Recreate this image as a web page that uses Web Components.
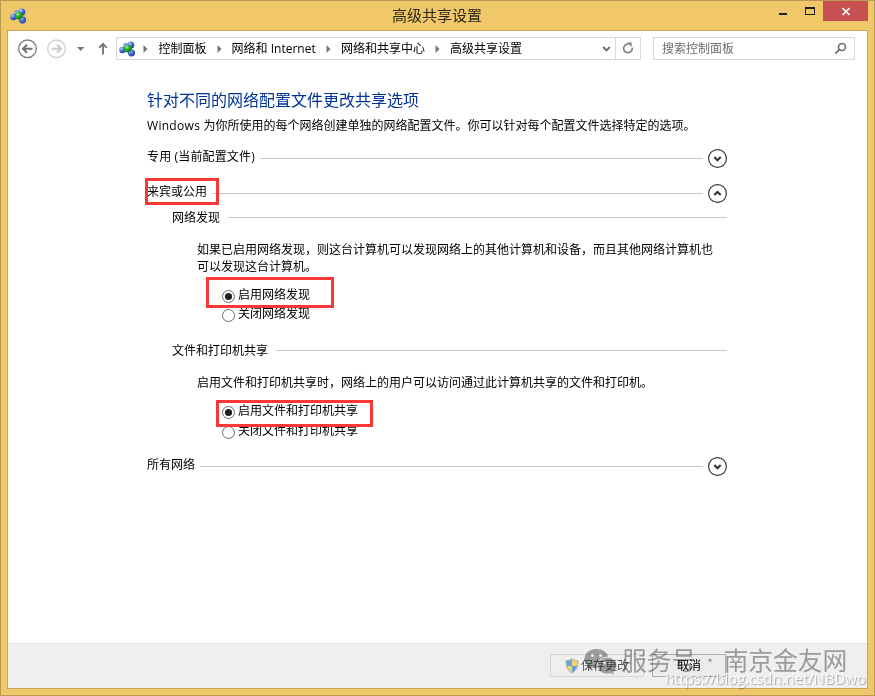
<!DOCTYPE html>
<html lang="zh-CN">
<head>
<meta charset="utf-8">
<title>高级共享设置</title>
<style>
  body {
    margin: 0;
    height: 696px;
    overflow: hidden;
    font: 12px/16px "Open Sans", "Noto Sans CJK SC", sans-serif;
    color: #000;
  }
</style>
</head>
<body>
<app-window caption="高级共享设置">
  <nav-bar slot="nav">
    <crumb-item>控制面板</crumb-item>
    <crumb-item>网络和 Internet</crumb-item>
    <crumb-item>网络和共享中心</crumb-item>
    <crumb-item>高级共享设置</crumb-item>
  </nav-bar>

  <settings-page heading="针对不同的网络配置文件更改共享选项">
    <span slot="intro"><span style="letter-spacing:.3px">Windows </span>为你所使用的每个网络创建单独的网络配置文件。你可以针对每个配置文件选择特定的选项。</span>

    <profile-section label="专用 (当前配置文件)" style="--tracking:.15px"></profile-section>

    <profile-section label="来宾或公用" open>
      <red-mark slot="mark" style="left:-2px;top:-6px;width:74px;height:27px"></red-mark>
      <option-group label="网络发现">
        <span slot="text">如果已启用网络发现，则这台计算机可以发现网络上的其他计算机和设备，而且其他网络计算机也可以发现这台计算机。</span>
        <radio-option checked>启用网络发现</radio-option>
        <radio-option>关闭网络发现</radio-option>
        <red-mark slot="mark" style="left:-16px;top:-8px;width:128px;height:31px"></red-mark>
      </option-group>
      <option-group label="文件和打印机共享" style="--gap:10px;--row:20px;margin-top:19px">
        <span slot="text">启用文件和打印机共享时，网络上的用户可以访问通过此计算机共享的文件和打印机。</span>
        <radio-option checked>启用文件和打印机共享</radio-option>
        <radio-option>关闭文件和打印机共享</radio-option>
        <red-mark slot="mark" style="left:-6px;top:-1px;width:157px;height:27px"></red-mark>
      </option-group>
    </profile-section>

    <profile-section label="所有网络"></profile-section>
  </settings-page>

  <push-button slot="actions" style="width:94px" shield disabled>保存更改</push-button>
  <push-button slot="actions" style="width:74px">取消</push-button>
  <water-mark slot="overlay"></water-mark>
</app-window>

<script>
  // small helper: every element here is a template in an open root
  function define(name, render) {
    customElements.define(name, class extends HTMLElement {
      connectedCallback() {
        if (this.shadowRoot) return;
        this.attachShadow({ mode: 'open' }).innerHTML = render(this);
      }
    });
  }

  define('net-icon', () => `
    <style>
      :host { display: block; width: 17px; height: 16px; }
      svg { display: block; }
    </style>
    <svg width="17" height="16" viewBox="0 0 17 16">
      <defs>
        <radialGradient id="b" cx=".35" cy=".3" r=".75">
          <stop offset="0" stop-color="#c4daff"/><stop offset=".4" stop-color="#5279dc"/><stop offset="1" stop-color="#1c3ab0"/>
        </radialGradient>
        <radialGradient id="g" cx=".35" cy=".3" r=".75">
          <stop offset="0" stop-color="#b4efae"/><stop offset=".4" stop-color="#2fae2c"/><stop offset="1" stop-color="#0a7a12"/>
        </radialGradient>
      </defs>
      <circle cx="6.5" cy="4" r="2.3" fill="#8aa5dc"/>
      <circle cx="11.8" cy="3.9" r="3.5" fill="url(#b)"/>
      <circle cx="3.5" cy="9" r="3.2" fill="url(#b)"/>
      <circle cx="12.5" cy="11.8" r="3.6" fill="url(#b)"/>
      <circle cx="8.9" cy="7.6" r="3.9" fill="url(#g)"/>
    </svg>`);

  define('app-window', el => `
    <style>
      :host {
        display: flex; flex-direction: column;
        position: relative;
        box-sizing: border-box;
        width: 875px; height: 696px;
        padding: 0 6px 6px;
        background: #f0c869;
        border: 1px solid #b8994f;
      }
      header { display: flex; height: 29px; }
      net-icon { margin: 7px 0 0 3px; }
      h1 {
        flex: 1;
        margin: 0 0 0 65px;
        font-size: 15px; line-height: 28px; font-weight: 400;
        text-align: center;
        color: #2d2718;
      }
      .ctl { display: flex; width: 90px; margin-left: -4px; }
      .ctl svg { display: block; }
      main {
        flex: 1;
        display: flex; flex-direction: column;
        border: 1px solid #cba859;
        background: #fff;
      }
      .body { flex: 1; }
      footer {
        display: flex; gap: 8px;
        box-sizing: border-box;
        height: 45px;
        padding: 10px 0 0 542px;
        background: #efefef;
        border-top: 1px solid #dfdfdf;
      }
    </style>
    <header>
      <net-icon></net-icon>
      <h1>${el.getAttribute('caption')}</h1>
      <div class="ctl">
        <svg width="90" height="20" viewBox="0 0 90 20" shape-rendering="crispEdges">
          <path d="M45 0h45v20H45z" fill="#c75050"/>
          <path d="M1 12h8v2H1z" fill="#1e1e1e"/>
          <path d="M27 6h10v8H27zM28 8v5h8V8z" fill-rule="evenodd" fill="#1e1e1e"/>
          <path d="M64.5 7l7 7M71.5 7l-7 7" stroke="#fff" stroke-width="1.7" shape-rendering="auto"/>
        </svg>
      </div>
    </header>
    <main>
      <slot name="nav"></slot>
      <div class="body"><slot></slot></div>
      <footer><slot name="actions"></slot></footer>
    </main>
    <slot name="overlay"></slot>`);

  define('nav-bar', () => `
    <style>
      :host { display: flex; height: 36px; padding: 6px 12px 0 9px; box-sizing: border-box; }
      .arrows { width: 99px; flex: none; }
      svg { display: block; }
      .box { display: flex; align-items: center; box-sizing: border-box; height: 23px; border: 1px solid #d9d9d9; }
      .address { width: 525px; }
      net-icon { margin: 0 2.4px 0 2px; }
      .crumbs { display: flex; flex: 1; }
      .search { flex: 1; margin-left: 12px; padding: 0 7px 0 8px; justify-content: space-between; color: #6d6d6d; }
    </style>
    <div class="arrows">
      <svg width="99" height="23" viewBox="17 37 99 23" fill="none">
        <circle cx="27.5" cy="48.8" r="8.8" stroke="#7b7b7b" stroke-width="1.3"/>
        <path d="M32.5 48.8h-9M27 44.8l-4 4 4 4" stroke="#727272" stroke-width="2"/>
        <circle cx="56.5" cy="48.8" r="8.8" stroke="#cfcfcf" stroke-width="1.3"/>
        <path d="M51.5 48.8h9M57 44.8l4 4-4 4" stroke="#cbcbcb" stroke-width="2"/>
        <path d="M77 47h7.4l-3.7 4z" fill="#777"/>
        <path d="M103 54.5V44M99.2 47.8l3.8-3.9 3.8 3.9" stroke="#777" stroke-width="1.9"/>
      </svg>
    </div>
    <div class="box address">
      <net-icon></net-icon>
      <div class="crumbs"><slot></slot></div>
      <svg width="39" height="21" viewBox="0 0 39 21" fill="none">
        <path d="M2.2 9l3.3 3.4L8.8 9" stroke="#6b6b6b" stroke-width="1.8"/>
        <path d="M14.5 0v21" stroke="#d9d9d9"/>
        <path d="M27.3 6.1a4.3 4.3 0 1 0 3.9 3.6" stroke="#7a7a7a" stroke-width="1.6"/>
        <path d="M26 4.5h4.6v4.3z" fill="#7a7a7a"/>
      </svg>
    </div>
    <div class="box search">
      <span>搜索控制面板</span>
      <svg width="13" height="13" viewBox="0 0 13 13" fill="none" stroke="#707070">
        <circle cx="8" cy="5" r="3.5" stroke-width="1.7"/>
        <path d="M5.6 7.4L1.3 11.6" stroke-width="2"/>
      </svg>
    </div>`);

  define('crumb-item', () => `
    <style>
      :host { display: flex; align-items: center; white-space: nowrap; }
      svg { width: 5px; height: 8px; margin: 1px 10px 0 5px; }
      :host(:not(:first-child)) svg { margin-left: 10.2px; }
    </style>
    <svg viewBox="0 0 5 8"><path d="M.5 0v8L4.5 4z" fill="#777"/></svg>
    <span><slot></slot></span>`);

  define('settings-page', el => `
    <style>
      :host { display: block; width: 580px; padding: 22px 0 0 139px; }
      h2 { margin: 0; font-size: 16px; line-height: 22px; font-weight: 400; color: #003399; }
      p { margin: 7px 0 15px; white-space: nowrap; }
    </style>
    <h2>${el.getAttribute('heading')}</h2>
    <p><slot name="intro"></slot></p>
    <slot></slot>`);

  define('profile-section', el => `
    <style>
      :host { display: block; margin-bottom: 16px; }
      .head { position: relative; display: flex; align-items: center; height: 19px; }
      .label { margin: -4px 5px 0 0; letter-spacing: var(--tracking, normal); }
      hr { flex: 1; margin: 0; border: 0; height: 1px; background: #c8c8c8; }
      svg { display: block; margin-left: 5px; }
      .content { padding: 6px 0 0 25px; }
    </style>
    <div class="head">
      <span class="label">${el.getAttribute('label')}</span>
      <hr>
      <svg width="19" height="19" viewBox="0 0 19 19" fill="none" stroke="#333">
        <circle cx="9.5" cy="9.5" r="8.9" stroke-width="1.15"/>
        <path d="${el.hasAttribute('open') ? 'M6.3 11l3.2-3.1 3.2 3.1' : 'M6.3 8.1l3.2 3.1 3.2-3.1'}" stroke-width="2.1"/>
      </svg>
      <slot name="mark"></slot>
    </div>
    ${el.hasAttribute('open') ? '<div class="content"><slot></slot></div>' : ''}`);

  define('option-group', el => `
    <style>
      :host { display: block; }
      .head { display: flex; align-items: center; height: 16px; }
      .head span { margin-top: 2px; }
      hr { flex: 1; margin: 0 0 0 8px; border: 0; height: 1px; background: #c8c8c8; }
      p { margin: 16px 0 0 25px; width: 520px; line-height: 17px; }
      .radios { position: relative; margin: var(--gap, 10px) 0 0 50px; }
    </style>
    <div class="head"><span>${el.getAttribute('label')}</span><hr></div>
    <p><slot name="text"></slot></p>
    <div class="radios"><slot></slot><slot name="mark"></slot></div>`);

  define('radio-option', el => `
    <style>
      :host { display: flex; align-items: center; height: var(--row, 19px); }
      svg { display: block; margin: 3px 3px 0 0; }
    </style>
    <svg width="13" height="13" viewBox="0 0 13 13">
      <circle cx="6.5" cy="6.5" r="6" fill="#fff" stroke="#6c6c6c"/>
      ${el.hasAttribute('checked') ? '<circle cx="6.5" cy="6.5" r="3.6" fill="#1f1f1f"/>' : ''}
    </svg>
    <span><slot></slot></span>`);

  // annotation frame, lies over the rows
  define('red-mark', () => `
    <style>
      :host { position: absolute; z-index: 1; box-sizing: border-box; border: 3px solid #fb3838; }
    </style>`);

  define('push-button', el => `
    <style>
      :host {
        display: flex; align-items: center; justify-content: center;
        gap: 2px;
        box-sizing: border-box; height: 23px;
        border: 1px solid #adadad;
        background: #ececec;
      }
      :host([disabled]) { border-color: #d5d5d5; background: #efefef; color: #555; }
      svg { display: block; }
    </style>
    ${el.hasAttribute('shield') ? `
    <svg width="14" height="16" viewBox="0 0 14 16">
      <clipPath id="s"><path d="M7 .8c1.8 1.3 3.8 1.8 6 1.9 0 5.8-1.3 9.6-6 12.3C2.3 12.3 1 8.5 1 2.7 3.2 2.6 5.2 2.1 7 .8z"/></clipPath>
      <g clip-path="url(#s)">
        <path d="M0 0h7v8H0zM7 8h7v8H7z" fill="#65a5d8"/>
        <path d="M7 0h7v8H7zM0 8h7v8H0z" fill="#f1d070"/>
      </g>
      <path d="M7 .8c1.8 1.3 3.8 1.8 6 1.9 0 5.8-1.3 9.6-6 12.3C2.3 12.3 1 8.5 1 2.7 3.2 2.6 5.2 2.1 7 .8z" fill="none" stroke="#a9b3bb"/>
    </svg>` : ''}
    <span><slot></slot></span>`);

  // multiplied, so the button texts stay readable underneath
  define('water-mark', () => `
    <style>
      :host {
        position: absolute; left: 583px; top: 641px;
        width: 284px; height: 46px;
        pointer-events: none;
      }
      .name {
        display: flex; align-items: center;
        height: 36px;
        font-size: 24.8px; line-height: 36px; white-space: nowrap;
        font-family: "Noto Sans CJK SC", sans-serif;
        color: #a6a6a6;
        mix-blend-mode: multiply;
      }
      .name span { margin-top: -2px; }
      svg { flex: none; margin: 3px 5px 0 0; }
      .name .dot { width: 27px; text-align: center; font-family: "Open Sans", sans-serif; }
      .url {
        position: absolute; left: 81px; top: 25px;
        font: 15px/22px "Open Sans", sans-serif;
        letter-spacing: -.08px;
        white-space: nowrap;
        color: rgba(255, 255, 255, .85);
        text-shadow: 1px 1px 1px rgba(0, 0, 0, .3);
      }
    </style>
    <div class="name">
      <svg width="33" height="27" viewBox="0 0 33 27" fill="#a6a6a6" fill-rule="evenodd">
        <path d="M12.5 1C5.7 1 .5 5.3.5 10.7c0 3 1.7 5.7 4.4 7.5L3.8 22l4.3-2.3c1.5.4 2.9.6 4.4.6h.7c-1.9-6.3 3.3-11.8 11-11.6C23.3 4.3 18.5 1 12.5 1zM8.4 5.7a1.6 1.6 0 1 1 0 3.2 1.6 1.6 0 0 1 0-3.2zm8.2 0a1.6 1.6 0 1 1 0 3.2 1.6 1.6 0 0 1 0-3.2z"/>
        <path d="M23.3 9.8c-5.4 0-9.5 3.5-9.5 7.9s4.1 7.9 9.5 7.9c1.2 0 2.4-.3 3.5-.6l3.3 1.8-.9-3c2.2-1.6 3.3-3.7 3.3-6.1 0-4.4-4-7.9-9.2-7.9zM20.2 13.7a1.3 1.3 0 1 1 0 2.6 1.3 1.3 0 0 1 0-2.6zm6.300 0a1.3 1.3 0 1 1 0 2.6 1.3 1.3 0 0 1 0-2.6z"/>
      </svg>
      <span>服务号</span><span class="dot">·</span><span>南京金友网</span>
    </div>
    <div class="url">https://blog.csdn.net/NBDwo</div>`);
</script>
</body>
</html>
